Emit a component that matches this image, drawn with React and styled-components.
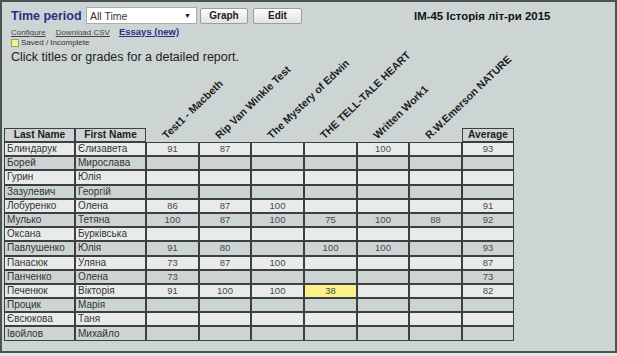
import styled, { createGlobalStyle, css } from 'styled-components';

const GlobalStyle = createGlobalStyle`
  html, body {
    margin: 0;
    padding: 0;
    background: #e2e6e6;
  }
  body {
    font-family: "Liberation Sans", Arial, sans-serif;
  }
`;

const Frame = styled.div`
  width: 617px;
  height: 353px;
  box-sizing: border-box;
  border: 2px solid #4b5252;
  background: #ccd5d4;
  padding: 5px 0 0 2px;
  overflow: hidden;
`;

const Header = styled.div`
  padding-left: 7px;
`;

const TopBar = styled.div`
  display: flex;
  align-items: center;
  height: 17px;
`;

const PeriodLabel = styled.span`
  font-weight: bold;
  font-size: 12.5px;
  color: #2b2f86;
  width: 75px;
`;

const Select = styled.div`
  display: flex;
  align-items: center;
  justify-content: space-between;
  width: 111px;
  height: 17px;
  box-sizing: border-box;
  background: #fff;
  border: 1px solid #a9adad;
  padding: 0 5px 0 3px;
  font-size: 10.5px;
  color: #333;
`;

const Caret = styled.span`
  font-size: 7px;
  color: #111;
`;

const Button = styled.button`
  margin-left: ${p => p.$gap}px;
  width: ${p => p.$w}px;
  height: 16px;
  padding: 0;
  border: 1px solid #9a9e9e;
  border-radius: 2px;
  background: linear-gradient(#fbfbfb, #e2e3e3);
  font-family: "Liberation Sans", Arial, sans-serif;
  font-weight: bold;
  font-size: 10px;
  color: #222;
`;

const CourseTitle = styled.span`
  margin-left: 112px;
  font-weight: bold;
  font-size: 11.4px;
  color: #111;
`;

const Links = styled.div`
  display: flex;
  align-items: baseline;
  margin-top: 2px;
  height: 11px;
  line-height: 11px;
`;

const SmallLink = styled.a`
  font-size: 8px;
  color: #444;
  text-decoration: underline;
  margin-right: ${p => p.$gap}px;
`;

const EssayLink = styled.a`
  font-size: 9.5px;
  font-weight: bold;
  color: #2b2f86;
  text-decoration: underline;
`;

const Legend = styled.div`
  display: flex;
  align-items: center;
  gap: 2px;
  height: 9px;
  margin-top: 1px;
  font-size: 8px;
  color: #333;
`;

const Swatch = styled.span`
  width: 6px;
  height: 6px;
  background: #f6f08e;
  border: 1px solid #9a9a7a;
`;

const Hint = styled.div`
  margin-top: 3px;
  font-size: 12.5px;
  line-height: 15px;
  color: #1c1c1c;
`;

const Grid = styled.table`
  width: 510px;
  table-layout: fixed;
  border-collapse: separate;
  border-spacing: 0;
  font-family: "Liberation Sans", Arial, sans-serif;
`;

const Blank = styled.td`
  height: 63px;
  padding: 0;
`;

const TitleCell = styled.th`
  position: relative;
  padding: 0;
  vertical-align: bottom;
`;

const Slant = styled.div`
  position: absolute;
  left: 22px;
  bottom: 1px;
  transform-origin: left bottom;
  transform: rotate(-44deg);
  white-space: nowrap;
  font-size: 10.6px;
  font-weight: bold;
  color: #1e1e1e;
  line-height: 12px;
`;

const HeadCell = styled.th`
  height: 12px;
  padding: 0;
  line-height: 12px;
  border: 1px solid #3c4040;
  font-size: 10.2px;
  font-weight: bold;
  color: #1e1e1e;
  text-align: center;
`;

const Row = styled.tr`
  background: ${p => (p.$odd ? '#ccd5d4' : '#e9ebeb')};
`;

const Cell = styled.td`
  height: 12.2px;
  padding: 0 0 0 2px;
  line-height: 12px;
  border: 1px solid #3c4040;
  font-size: 10px;
  color: #333;
  white-space: nowrap;
  overflow: hidden;
  ${p => p.$grade && css`
    padding: 0;
    text-align: center;
    font-size: 9.5px;
    color: #4a4a4a;
  `}
  ${p => p.$pending && css`
    background: #fbf38a;
  `}
`;

const tests = [
  'Test1 - Macbeth',
  'Rip Van Winkle Test',
  'The Mystery of Edwin',
  'THE TELL-TALE HEART',
  'Written Work1',
  'R.W.Emerson NATURE',
];

const colWidths = [71, 71, 53, 52, 53, 53, 52, 53, 52];

// grades in test order, then average; pending marks a saved/incomplete entry
const students = [
  { last: 'Блиндарук', first: 'Єлизавета', grades: [91, 87, '', '', 100, ''], avg: 93 },
  { last: 'Борей', first: 'Мирослава' },
  { last: 'Гурин', first: 'Юлія' },
  { last: 'Зазулевич', first: 'Георгій' },
  { last: 'Лобуренко', first: 'Олена', grades: [86, 87, 100, '', '', ''], avg: 91 },
  { last: 'Мулько', first: 'Тетяна', grades: [100, 87, 100, 75, 100, 88], avg: 92 },
  { last: 'Оксана', first: 'Бурківська' },
  { last: 'Павлушенко', first: 'Юлія', grades: [91, 80, '', 100, 100, ''], avg: 93 },
  { last: 'Панасюк', first: 'Уляна', grades: [73, 87, 100, '', '', ''], avg: 87 },
  { last: 'Панченко', first: 'Олена', grades: [73, '', '', '', '', ''], avg: 73 },
  { last: 'Печенюк', first: 'Вікторія', grades: [91, 100, 100, 38, '', ''], avg: 82, pending: 3 },
  { last: 'Процик', first: 'Марія' },
  { last: 'Євсюкова', first: 'Таня' },
  { last: 'Івойлов', first: 'Михайло' },
];

export default function App() {
  return (
    <>
      <GlobalStyle />
      <Frame>
        <Header>
          <TopBar>
            <PeriodLabel>Time period</PeriodLabel>
            <Select>
              <span>All Time</span>
              <Caret>▼</Caret>
            </Select>
            <Button $gap={3} $w={48}>Graph</Button>
            <Button $gap={5} $w={49}>Edit</Button>
            <CourseTitle>IM-45 Історія літ-ри 2015</CourseTitle>
          </TopBar>
          <Links>
            <SmallLink $gap={10}>Configure</SmallLink>
            <SmallLink $gap={9}>Download CSV</SmallLink>
            <EssayLink>Essays (new)</EssayLink>
          </Links>
          <Legend>
            <Swatch />
            Saved / Incomplete
          </Legend>
          <Hint>Click titles or grades for a detailed report.</Hint>
        </Header>
        <Grid>
          <colgroup>
            {colWidths.map((w, i) => <col key={i} style={{ width: w }} />)}
          </colgroup>
          <thead>
            <tr>
              <Blank colSpan={2} />
              {tests.map(t => (
                <TitleCell key={t} rowSpan={2}>
                  <Slant>{t}</Slant>
                </TitleCell>
              ))}
              <Blank />
            </tr>
            <tr>
              <HeadCell>Last Name</HeadCell>
              <HeadCell>First Name</HeadCell>
              <HeadCell>Average</HeadCell>
            </tr>
          </thead>
          <tbody>
            {students.map((s, i) => {
              const grades = s.grades || ['', '', '', '', '', ''];
              return (
                <Row key={s.last} $odd={i % 2 === 1}>
                  <Cell>{s.last}</Cell>
                  <Cell>{s.first}</Cell>
                  {grades.map((g, j) => (
                    <Cell key={j} $grade $pending={s.pending === j}>{g}</Cell>
                  ))}
                  <Cell $grade>{s.avg || ''}</Cell>
                </Row>
              );
            })}
          </tbody>
        </Grid>
      </Frame>
    </>
  );
}
